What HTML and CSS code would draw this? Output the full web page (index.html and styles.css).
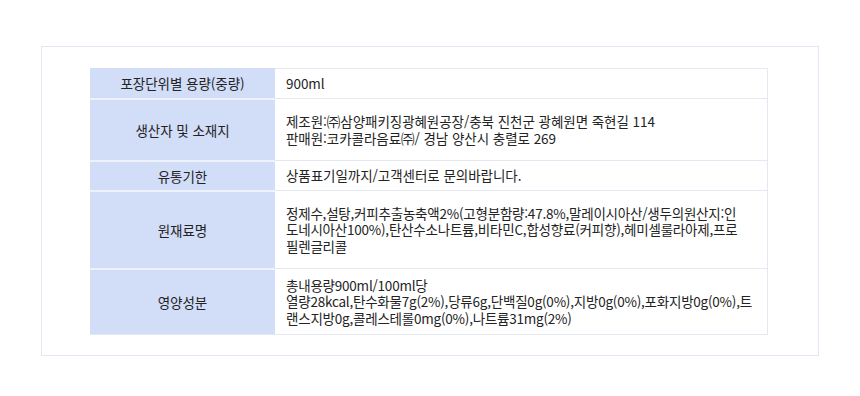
FILE: index.html
```html
<!DOCTYPE html>
<html lang="ko">
<head>
<meta charset="utf-8">
<link rel="stylesheet" href="styles.css">
</head>
<body>
<div class="box">
  <div class="info">
    <div class="row r1">
      <div class="th">포장단위별 용량(중량)</div>
      <div class="td">900ml</div>
    </div>
    <div class="row r2">
      <div class="th">생산자 및 소재지</div>
      <div class="td"><p>제조원:㈜삼양패키징광혜원공장/충북 진천군 광혜원면 죽현길 114<br>판매원:코카콜라음료㈜/ 경남 양산시 충렬로 269</p></div>
    </div>
    <div class="row r3">
      <div class="th">유통기한</div>
      <div class="td">상품표기일까지/고객센터로 문의바랍니다.</div>
    </div>
    <div class="row r4">
      <div class="th">원재료명</div>
      <div class="td tight"><p>정제수,설탕,커피추출농축액2%(고형분함량:47.8%,말레이시아산/생두의원산지:인<br>도네시아산100%),탄산수소나트륨,비타민C,합성향료(커피향),헤미셀룰라아제,프로<br>필렌글리콜</p></div>
    </div>
    <div class="row r5">
      <div class="th">영양성분</div>
      <div class="td tight"><p>총내용량900ml/100ml당<br>열량28kcal,탄수화물7g(2%),당류6g,단백질0g(0%),지방0g(0%),포화지방0g(0%),트<br>랜스지방0g,콜레스테롤0mg(0%),나트륨31mg(2%)</p></div>
    </div>
  </div>
</div>
</body>
</html>
```
FILE: styles.css
```css
html, body {
  margin: 0;
  padding: 0;
  background: #ffffff;
}
body {
  font-family: "Noto Sans CJK KR", "Noto Sans", sans-serif;
  color: #232323;
  font-size: 13.5px;
  letter-spacing: -0.05px;
}
.box {
  margin: 46px 0 0 41px;
  width: 778px;
  height: 310px;
  border: 1px solid #e2e6f4;
  padding: 21px 0 0 48px;
  box-sizing: border-box;
}
.info {
  width: 678px;
  display: flex;
  flex-direction: column;
  border-bottom: 1px solid #e3e8f3;
}
.row {
  display: grid;
  grid-template-columns: 185px 1fr;
}
.th {
  background: #d2ddf8;
  display: flex;
  align-items: center;
  justify-content: center;
  text-align: center;
  border-top: 2px solid #eef2fc;
  line-height: 16.5px;
}
.r1 .th { border-top: none; }
.td {
  display: flex;
  align-items: center;
  border-top: 1px solid #e3e8f3;
  border-right: 1px solid #e3e8f3;
  padding: 0 6px 0 11px;
  line-height: 16.5px;
  white-space: nowrap;
  overflow: hidden;
}
.td.tight { letter-spacing: -0.22px; }
.td p { margin: 0; }
.r1 { height: 30px; }
.r2 { height: 62px; }
.r3 { height: 30px; }
.r4 { height: 78px; }
.r5 { height: 66px; }
```
